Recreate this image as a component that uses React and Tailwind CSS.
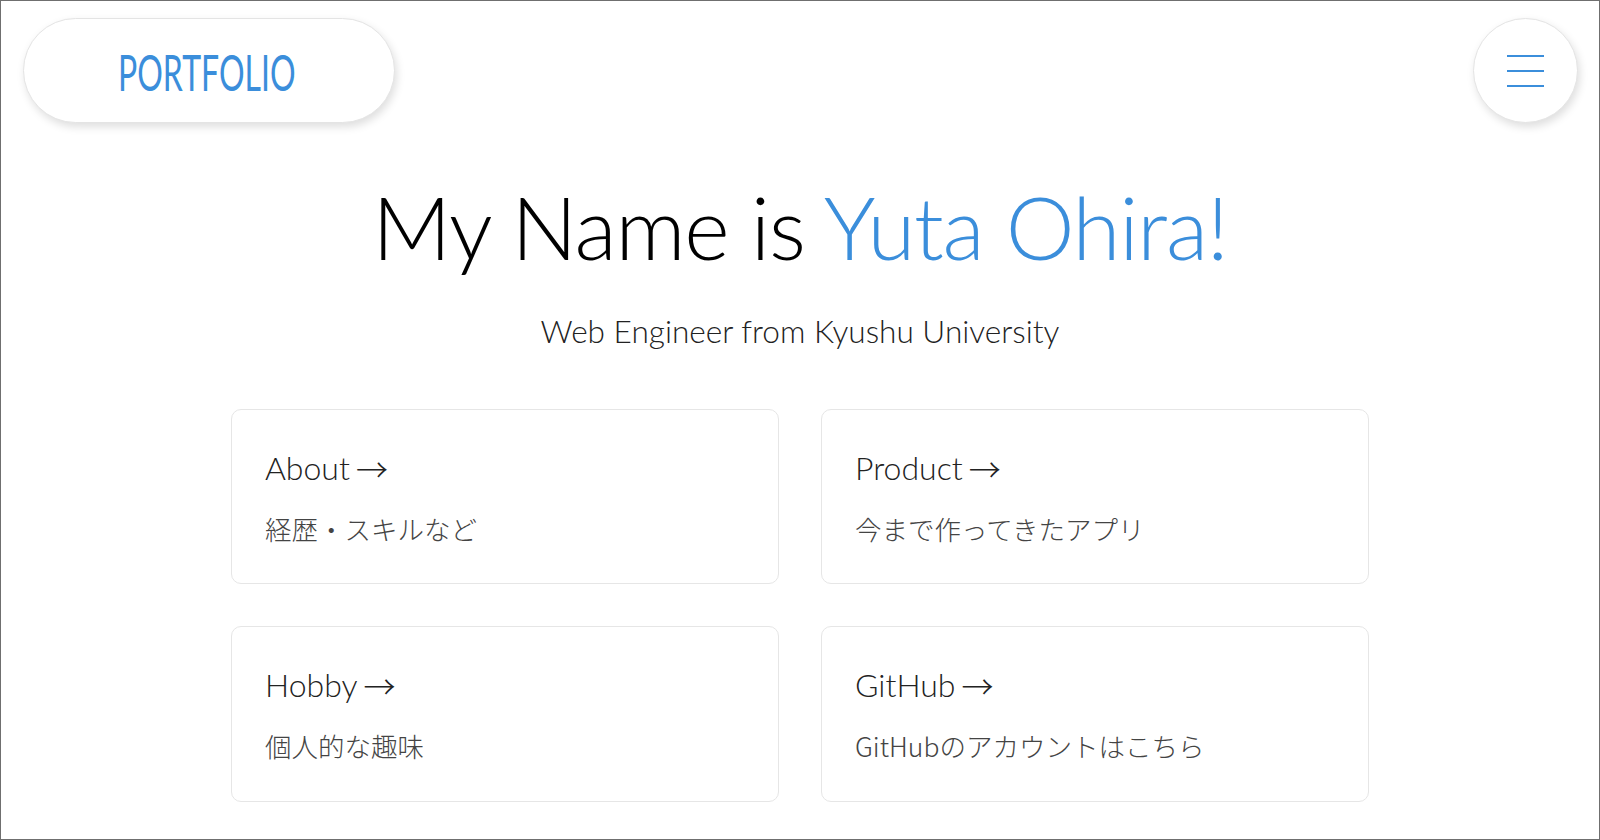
const links = [
  { title: 'About', text: '経歴・スキルなど' },
  { title: 'Product', text: '今まで作ってきたアプリ' },
  { title: 'Hobby', text: '個人的な趣味' },
  { title: 'GitHub', text: 'GitHubのアカウントはこちら' },
]

function Header() {
  return (
    <header className="flex items-start justify-between pl-[22px] pr-[21px] pt-[17px]">
      <div className="flex h-[105px] w-[372px] items-center justify-center rounded-full border border-[#e4e4e4] bg-white shadow-[2px_4px_8px_rgba(0,0,0,0.13)]">
        <span className="inline-block origin-center scale-x-[0.64] pr-[6px] pt-[3px] text-[50px] leading-none text-[#3b8edb]">
          PORTFOLIO
        </span>
      </div>
      <button className="flex h-[105px] w-[105px] flex-col items-center justify-center gap-[13px] rounded-full border border-[#e4e4e4] bg-white shadow-[2px_4px_8px_rgba(0,0,0,0.13)]">
        <span className="block h-[2px] w-[37px] bg-[#3b8edb]" />
        <span className="block h-[2px] w-[37px] bg-[#3b8edb]" />
        <span className="block h-[2px] w-[37px] bg-[#3b8edb]" />
      </button>
    </header>
  )
}

function LinkCard({ title, text }) {
  return (
    <a className="block rounded-[10px] border border-[#e6e6e6] bg-white pb-[41px] pl-[33px] pt-[42px]">
      <div className="flex items-center text-[32px] font-light leading-none text-[#222]">
        <span>{title}</span>
        <span className="ml-[6px] font-['Noto_Sans_CJK_JP',sans-serif] text-[32px] font-light">→</span>
      </div>
      <div className="mt-[32px] font-['Noto_Sans_CJK_JP',sans-serif] text-[26.5px] font-light leading-none text-[#444]">
        {text}
      </div>
    </a>
  )
}

function App() {
  return (
    <div
      className="h-[840px] overflow-hidden border border-[#6f6f6f] bg-white"
      style={{ fontFamily: 'Lato, "Noto Sans CJK JP", sans-serif' }}
    >
      <Header />

      <main>
        <h1 className="mt-[60px] text-center text-[87px] font-light leading-none tracking-[-0.014em] text-black">
          My Name is <span className="text-[#3b8edb]">Yuta Ohira!</span>
        </h1>
        <p className="mt-[46px] text-center text-[31.6px] font-light leading-none text-[#222]">
          Web Engineer from Kyushu University
        </p>

        <div className="mx-auto mt-[61px] grid w-[1138px] grid-cols-2 gap-x-[42px] gap-y-[42px]">
          {links.map((link) => (
            <LinkCard key={link.title} {...link} />
          ))}
        </div>
      </main>
    </div>
  )
}

export default App
